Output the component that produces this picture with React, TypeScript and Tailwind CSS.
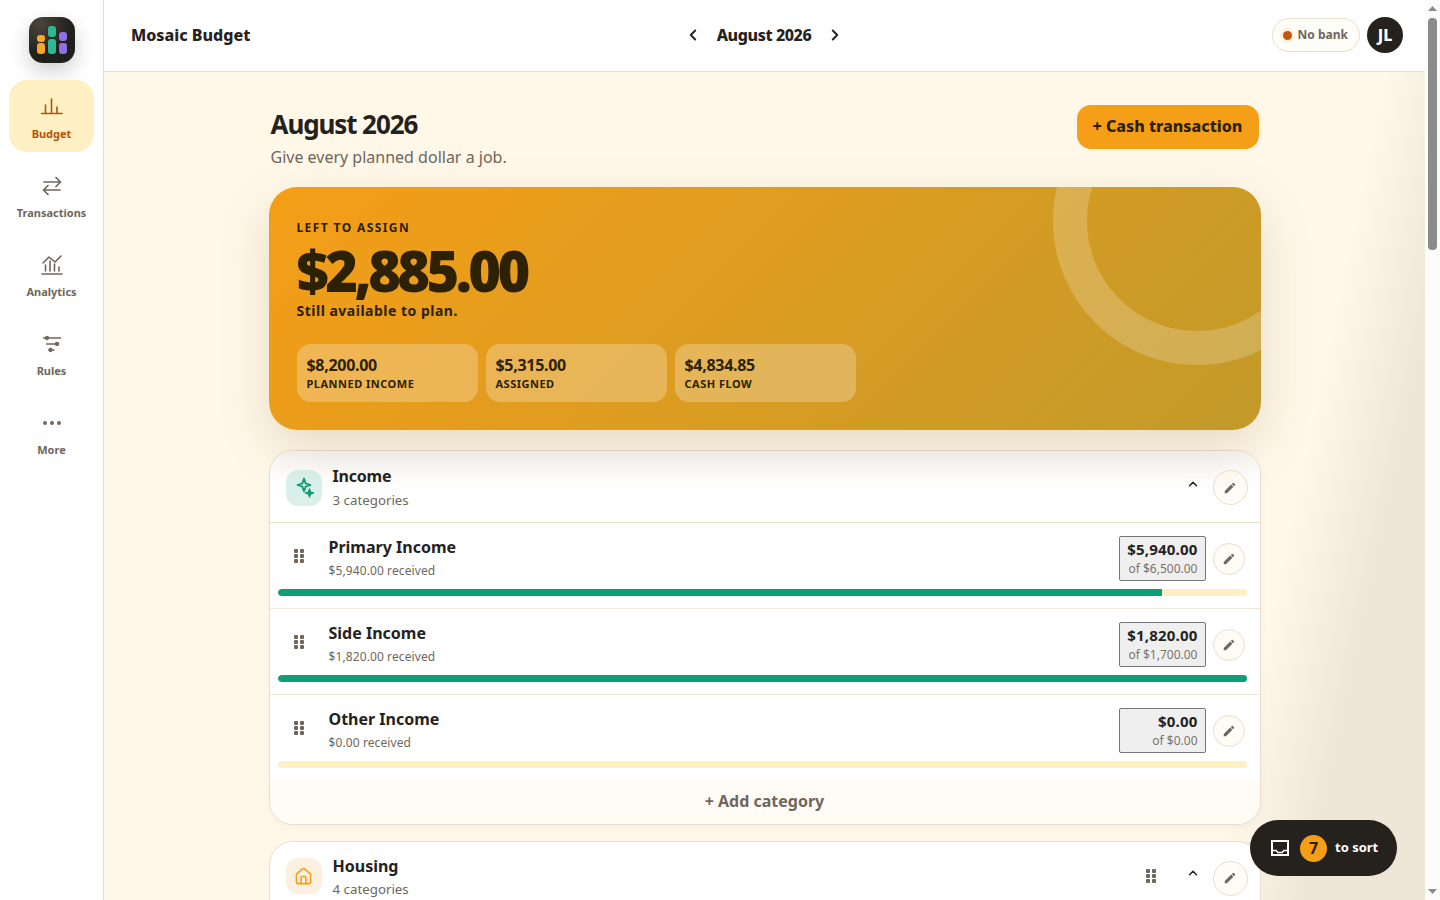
import { ChevronLeft, ChevronRight, ChevronUp, Ellipsis, House } from 'lucide-react';
import type { ReactNode } from 'react';

const FONT = "font-['Noto_Sans','Open_Sans',sans-serif]";

function BudgetIcon() {
  return (
    <svg width="24" height="24" viewBox="0 0 24 24" fill="none" stroke="currentColor" strokeWidth="1.6" strokeLinecap="round" className="-mt-[2px] mb-[2px]">
      <path d="M1.500 20.500h20.500" />
      <path d="M5.500 20v-8M11.500 20V6M17 20v-6" />
    </svg>
  );
}

function TransferIcon() {
  return (
    <svg width="24" height="24" viewBox="0 0 24 24" fill="none" stroke="currentColor" strokeWidth="1.7" strokeLinecap="round" strokeLinejoin="round">
      <path d="M4 8h16M16 3.500 20.500 8 16 12.500" />
      <path d="M20 16H4M8 11.500 3.500 16 8 20.500" />
    </svg>
  );
}

function AnalyticsIcon() {
  return (
    <svg width="24" height="24" viewBox="0 0 24 24" fill="none" stroke="currentColor" strokeWidth="1.6" strokeLinecap="round" strokeLinejoin="round">
      <path d="M2 21h20" />
      <path d="M5.500 18v-6M10 18V8M14.500 18v-7M19 18v-4" />
      <path d="M3 10l6-6 6 5 6-6" />
    </svg>
  );
}

function RulesIcon() {
  return (
    <svg width="24" height="24" viewBox="0 0 24 24" fill="none" stroke="currentColor" strokeWidth="1.5" strokeLinecap="round">
      <path d="M3.500 6h17M6.500 12h12M9 18h5" />
      <circle cx="7" cy="6" r="1.400" fill="currentColor" />
      <circle cx="17" cy="12" r="1.400" fill="currentColor" />
      <circle cx="10.500" cy="18" r="1.400" fill="currentColor" />
    </svg>
  );
}

function SparkIcon() {
  return (
    <svg width="24" height="24" viewBox="0 0 24 24" fill="none" stroke="currentColor" strokeWidth="1.8" strokeLinejoin="round">
      <path d="M12 2.500 13.600 7.400 18.500 9 13.600 10.600 12 15.500 10.400 10.600 5.500 9 10.400 7.400z" />
      <path d="M17.500 12.500 18.700 15.800 22 17 18.700 18.200 17.500 21.500 16.300 18.200 13 17 16.300 15.800z" fill="currentColor" strokeWidth="1" />
    </svg>
  );
}

function PencilIcon() {
  return (
    <svg width="14" height="14" viewBox="0 0 24 24" fill="currentColor">
      <path d="M3 17.250V21h3.750L17.810 9.940l-3.750-3.750L3 17.250zM20.710 7.040a1 1 0 0 0 0-1.410l-2.340-2.340a1 1 0 0 0-1.410 0l-1.830 1.830 3.750 3.750 1.830-1.830z" />
    </svg>
  );
}

function TrayIcon() {
  return (
    <svg width="18" height="16" viewBox="0 0 18 16" fill="none" stroke="currentColor" strokeWidth="2">
      <path d="M1 1h16v14H1z" />
      <path d="M1 10.500h4l2 2h4l2-2h4" strokeWidth="1.500" />
    </svg>
  );
}

function GripIcon({ className }: { className: string }) {
  return (
    <svg width="10" height="14" viewBox="0 0 10 14" className={className} fill="currentColor">
      <rect x="0" y="0" width="4" height="4" rx="1" />
      <rect x="6" y="0" width="4" height="4" rx="1" />
      <rect x="0" y="5" width="4" height="4" rx="1" />
      <rect x="6" y="5" width="4" height="4" rx="1" />
      <rect x="0" y="10" width="4" height="4" rx="1" />
      <rect x="6" y="10" width="4" height="4" rx="1" />
    </svg>
  );
}

// the classic window scrollbar seen in the picture
function ScrollStrip() {
  return (
    <div className="flex h-screen w-[15px] shrink-0 flex-col items-center bg-[#fcfcfc]">
      <svg width="9" height="18" viewBox="0 0 9 18" fill="#8b8b8b">
        <path d="M0 11 4.500 6 9 11z" />
      </svg>
      <div className="h-[232px] w-[9px] shrink-0 rounded-[4px] bg-[#8b8b8b]" />
      <div className="flex-1" />
      <svg width="9" height="18" viewBox="0 0 9 18" fill="#8b8b8b">
        <path d="M0 7 4.500 12 9 7z" />
      </svg>
    </div>
  );
}

function NavItem({ label, icon, active }: { label: string; icon: ReactNode; active?: boolean }) {
  return (
    <div
      className={`flex h-[72px] w-[85px] flex-col items-center justify-center gap-[7px] rounded-[18px] pt-[4px] text-[11px] leading-[15px] font-bold ${
        active ? 'bg-[#fef0c2] text-[#b45309]' : 'text-[#6f675c]'
      }`}
    >
      {icon}
      <span>{label}</span>
    </div>
  );
}

function EditButton({ big }: { big?: boolean }) {
  return (
    <button
      className={`flex shrink-0 items-center justify-center rounded-full border border-[#e8dfce] bg-[#fffcf5] text-[#6f675c] ${
        big ? 'h-[35px] w-[35px]' : 'h-8 w-8'
      }`}
    >
      <PencilIcon />
    </button>
  );
}

function Stat({ value, label }: { value: string; label: string }) {
  return (
    <div className="h-[58px] w-[181px] rounded-[14px] bg-white/25 px-[10px] pt-[10px]">
      <div className="text-base leading-[22px] font-bold tracking-[-0.3px]">{value}</div>
      <div className="text-[11px] leading-[15px] font-bold tracking-[0.5px]">{label}</div>
    </div>
  );
}

function CategoryRow({
  name,
  received,
  amount,
  target,
  percent,
  last,
}: {
  name: string;
  received: string;
  amount: string;
  target: string;
  percent: number;
  last?: boolean;
}) {
  return (
    <div className={`pt-[13px] pr-[13px] pl-2 ${last ? 'h-[84px]' : 'h-[86px] border-b border-[#efe7d8]'}`}>
      <div className="flex h-[45px] items-center">
        <GripIcon className="mb-[6px] ml-4 text-[#6f675c]" />
        <div className="ml-[25px] flex-1">
          <div className="text-base leading-[22px] font-bold text-[#25221e]">{name}</div>
          <div className="mt-[3px] text-xs leading-[20px] tracking-[0.1px] text-[#6f675c]">{received}</div>
        </div>
        <div className="min-w-[87px] rounded-[2px] border border-[#767676] bg-[#efefef] px-[7px] pt-[2px] pb-[3px] text-right">
          <div className="text-[15px] leading-[20px] font-bold tracking-[0.2px] text-[#25221e]">{amount}</div>
          <div className="mt-[1px] text-xs leading-[17px] text-[#7a7369]">{target}</div>
        </div>
        <div className="mr-[2px] ml-[7px]">
          <EditButton />
        </div>
      </div>
      <div className="mt-[8px] h-[7px] overflow-hidden rounded-full bg-[#fef0c2]">
        <div className="h-full rounded-l-full bg-[#0d9f76]" style={{ width: `${percent}%` }} />
      </div>
    </div>
  );
}

export default function App() {
  return (
    <div className={`flex h-screen overflow-hidden ${FONT}`}>
      <aside className="flex h-screen w-[104px] shrink-0 flex-col items-center gap-[7px] border-r border-[#e8dfce] bg-white pt-[17px]">
        <div className="mb-[10px] flex h-[46px] w-[46px] items-end justify-center gap-[3px] rounded-[14px] bg-[radial-gradient(circle_at_25%_15%,#4b453a,#211f1b_60%)] pb-[9px] shadow-[0_8px_20px_rgba(37,34,30,0.22)]">
          <div className="flex w-2 flex-col gap-[1px]">
            <div className="h-[7px] rounded-[3px] bg-[#fba62a]" />
            <div className="h-[11px] rounded-[3px] bg-[#fba62a]" />
          </div>
          <div className="flex w-2 flex-col gap-[2px]">
            <div className="h-[11px] rounded-[3px] bg-[#2bb893]" />
            <div className="h-[15px] rounded-[3px] bg-[#2bb893]" />
          </div>
          <div className="flex w-2 flex-col gap-[2px]">
            <div className="h-[9px] rounded-[3px] bg-[#8e6fe6]" />
            <div className="h-[11px] rounded-[3px] bg-[#8e6fe6]" />
          </div>
        </div>
        <NavItem label="Budget" icon={<BudgetIcon />} active />
        <NavItem label="Transactions" icon={<TransferIcon />} />
        <NavItem label="Analytics" icon={<AnalyticsIcon />} />
        <NavItem label="Rules" icon={<RulesIcon />} />
        <NavItem label="More" icon={<Ellipsis size={24} />} />
      </aside>

      <div className="h-screen min-w-0 flex-1 overflow-y-auto [scrollbar-width:none]">
        <div className="min-h-[3360px] bg-[linear-gradient(102deg,#fff8e9_1270px,#eee6d6_1360px)]">
          <header className="sticky top-0 z-10 flex h-[72px] items-center justify-between border-b border-[#e8dfce] bg-white pr-[22px] pb-[1px] pl-[27px]">
            <div className="w-[200px] text-base font-extrabold text-[#25221e]">Mosaic Budget</div>
            <div className="flex items-center gap-[13px] text-[#25221e]">
              <ChevronLeft size={18} strokeWidth={2.5} />
              <span className="w-[98px] text-center text-base font-extrabold tracking-[-0.4px]">August 2026</span>
              <ChevronRight size={18} strokeWidth={2.5} />
            </div>
            <div className="flex w-[206px] items-center justify-end gap-[7px]">
              <div className="flex h-[34px] items-center gap-[6px] rounded-full border border-[#e8dfce] bg-[#fffdf8] pr-[11px] pl-[10px] text-xs font-bold text-[#6f675c]">
                <span className="h-[9px] w-[9px] rounded-full bg-[#c2570c] shadow-[0_0_0_3px_#fdf0e0]" />
                No bank
              </div>
              <div className="flex h-9 w-9 items-center justify-center rounded-full bg-[#25221e] text-base font-extrabold text-white">JL</div>
            </div>
          </header>

          <main className="mx-auto w-[992px] pt-[33px]">
            <div className="flex items-start justify-between px-[2px]">
              <div>
                <h1 className="text-[26px] leading-[38px] font-bold tracking-[-1.1px] text-[#25221e]">August 2026</h1>
                <p className="mt-[2px] text-base leading-[24px] text-[#6f675c]">Give every planned dollar a job.</p>
              </div>
              <button className="h-11 w-[182px] rounded-[14px] bg-[#f59e17] pb-[2px] text-base font-extrabold text-[#2d2103]">+ Cash transaction</button>
            </div>

            <section className="relative mt-[18px] h-[243px] overflow-hidden rounded-[28px] bg-[linear-gradient(135deg,#f59e17,#c29a2b)] pt-[32px] pl-[28px] text-[#2d2103] shadow-[0_18px_50px_rgba(120,90,30,0.18)]">
              <div className="absolute top-[-110px] right-[-80px] h-[288px] w-[288px] rounded-full border-[34px] border-white/20" />
              <div className="text-xs leading-[17px] font-bold tracking-[1.4px]">LEFT TO ASSIGN</div>
              <div className="mt-[3px] text-[56px] leading-[62px] font-black tracking-[-3.6px]">$2,885.00</div>
              <div className="text-sm leading-[19px] font-bold tracking-[0.5px]">Still available to plan.</div>
              <div className="mt-[24px] flex gap-2">
                <Stat value="$8,200.00" label="PLANNED INCOME" />
                <Stat value="$5,315.00" label="ASSIGNED" />
                <Stat value="$4,834.85" label="CASH FLOW" />
              </div>
            </section>

            <section className="mt-5 overflow-hidden rounded-[24px] border border-[#e8dfce] bg-white shadow-[0_2px_6px_rgba(120,90,30,0.06)]">
              <div className="flex h-[72px] items-center border-b border-[#e8dfce] bg-[linear-gradient(180deg,#f8f7f5,#ffffff_45%)] pr-3 pl-4">
                <div className="mt-[2px] flex h-9 w-9 items-center justify-center rounded-xl bg-[#d9f1e9] text-[#0d9f76]">
                  <SparkIcon />
                </div>
                <div className="ml-[11px] flex-1 pt-[2px]">
                  <div className="text-base leading-[22px] font-bold tracking-[-0.2px] text-[#25221e]">Income</div>
                  <div className="mt-[3px] text-[13.3px] leading-[20px] text-[#6f675c]">3 categories</div>
                </div>
                <ChevronUp size={14} strokeWidth={2.5} className="mr-[13px] mb-[6px] text-[#25221e]" />
                <div className="mt-[2px]">
                  <EditButton big />
                </div>
              </div>
              <CategoryRow name="Primary Income" received="$5,940.00 received" amount="$5,940.00" target="of $6,500.00" percent={91.3} />
              <CategoryRow name="Side Income" received="$1,820.00 received" amount="$1,820.00" target="of $1,700.00" percent={100} />
              <CategoryRow name="Other Income" received="$0.00 received" amount="$0.00" target="of $0.00" percent={0} last />
              <div className="flex h-[45px] items-center justify-center bg-[#fffcf5] pb-[2px] text-base font-bold text-[#6f675c]">+ Add category</div>
            </section>

            <section className="mt-4 overflow-hidden rounded-t-[24px] border border-[#e8dfce] bg-white">
              <div className="flex h-[72px] items-center pr-3 pl-4">
                <div className="mb-[4px] flex h-9 w-9 items-center justify-center rounded-xl bg-[#fdf0e0] text-[#f59e17]">
                  <House size={19} strokeWidth={2} />
                </div>
                <div className="-mt-[2px] ml-[11px] flex-1">
                  <div className="text-base leading-[22px] font-bold text-[#25221e]">Housing</div>
                  <div className="mt-[2px] text-[13.3px] leading-[20px] text-[#6f675c]">4 categories</div>
                </div>
                <GripIcon className="mr-[30px] mb-[4px] text-[#6f675c]" />
                <ChevronUp size={14} strokeWidth={2.5} className="mr-[13px] mb-[10px] text-[#25221e]" />
                <EditButton big />
              </div>
            </section>
          </main>
        </div>
      </div>

      <ScrollStrip />

      <div className="fixed right-[43px] bottom-6 z-20 flex h-14 w-[147px] items-center rounded-full bg-[#25221e] pl-[21px] text-white">
        <TrayIcon />
        <span className="ml-[11px] flex h-[27px] w-[27px] items-center justify-center rounded-full bg-[#f59e17] text-base font-bold text-[#2d2103]">7</span>
        <span className="ml-2 text-[13px] font-bold">to sort</span>
      </div>
    </div>
  );
}
